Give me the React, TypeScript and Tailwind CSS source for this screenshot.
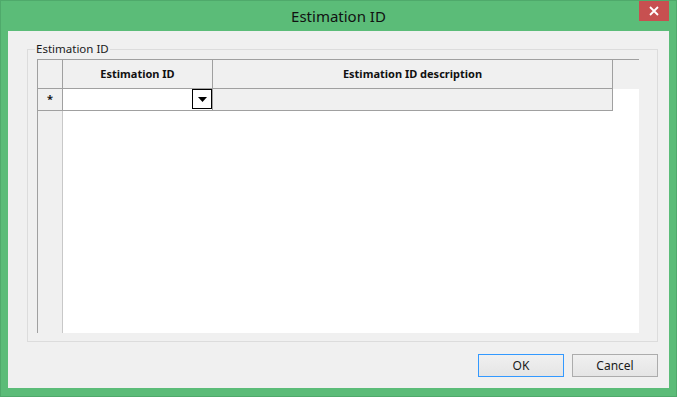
import React from "react";

const font = { fontFamily: '"Segoe UI", "Noto Sans", "Open Sans", sans-serif' };

export default function App() {
  return (
    <div
      className="w-[677px] h-[397px] bg-[#5bbc78] border border-[#4fa96b] flex flex-col overflow-hidden"
      style={font}
    >
      {/* Title bar */}
      <div className="h-[30px] flex relative shrink-0">
        <div className="flex-1 flex items-center justify-center text-[15px] text-[#111111] pt-[1px]">
          Estimation ID
        </div>
        <div className="absolute right-[7px] top-[-1px] w-[30px] h-[21px] bg-[#c75050] flex items-center justify-center">
          <svg width="10" height="10" viewBox="0 0 10 10">
            <path d="M1 1 L9 9 M9 1 L1 9" stroke="#ffffff" strokeWidth="1.8" />
          </svg>
        </div>
      </div>

      {/* Client area */}
      <div className="mx-[7px] mb-[8px] flex-1 bg-[#f0f0f0] flex flex-col">
        {/* Group box */}
        <div className="relative mt-[18px] ml-[19px] mr-[11px] h-[293px] border border-[#dcdcdc] flex flex-col">
          <div className="absolute left-[7px] top-[-9px] bg-[#f0f0f0] px-[1px] text-[11.5px] leading-[16px] text-[#1a1a1a]">
            Estimation ID
          </div>
          {/* Grid */}
          <div className="mt-[9px] ml-[9px] mr-[18px] h-[274px] border-l border-t border-[#a0a0a0] flex flex-col bg-white">
            {/* Header */}
            <div className="h-[29px] flex bg-[#f0f0f0] shrink-0">
              <div className="w-[25px] border-r border-b border-[#a0a0a0]" />
              <div className="w-[150px] border-r border-b border-[#a0a0a0] flex items-center justify-center text-[11px] font-bold text-[#111111]">
                Estimation ID
              </div>
              <div className="w-[400px] border-r border-b border-[#a0a0a0] flex items-center justify-center text-[11px] font-bold text-[#111111]">
                Estimation ID description
              </div>
              <div className="flex-1 bg-[#f0f0f0]" />
            </div>
            {/* Row */}
            <div className="h-[22px] flex shrink-0">
              <div className="w-[25px] border-r border-b border-[#a0a0a0] bg-[#f0f0f0] flex items-center justify-center text-[11px] font-bold text-[#1a1a1a]">
                *
              </div>
              <div className="w-[150px] border-r border-b border-[#a0a0a0] bg-white flex justify-end items-start">
                <div className="w-[20px] h-[20px] border border-black bg-white flex items-center justify-center">
                  <svg width="9" height="5" viewBox="0 0 9 5">
                    <path d="M0 0 L9 0 L4.5 5 Z" fill="#000" />
                  </svg>
                </div>
              </div>
              <div className="w-[400px] border-r border-b border-[#a0a0a0] bg-[#f0f0f0]" />
              <div className="flex-1 bg-white" />
            </div>
            {/* Body */}
            <div className="flex-1 flex">
              <div className="w-[25px] border-r border-[#c8c8c8] bg-[#f0f0f0]" />
              <div className="flex-1 bg-white" />
            </div>
          </div>
        </div>

        {/* Buttons */}
        <div className="flex justify-end gap-[8px] mt-[12px] mr-[11px]">
          <button className="w-[86px] h-[23px] border border-[#3399ff] bg-gradient-to-b from-[#f0f0f0] to-[#e5e5e5] text-[12px] text-[#1a1a1a] flex items-center justify-center">
            OK
          </button>
          <button className="w-[86px] h-[23px] border border-[#acacac] bg-gradient-to-b from-[#f0f0f0] to-[#e5e5e5] text-[12px] text-[#1a1a1a] flex items-center justify-center">
            Cancel
          </button>
        </div>
      </div>
    </div>
  );
}
